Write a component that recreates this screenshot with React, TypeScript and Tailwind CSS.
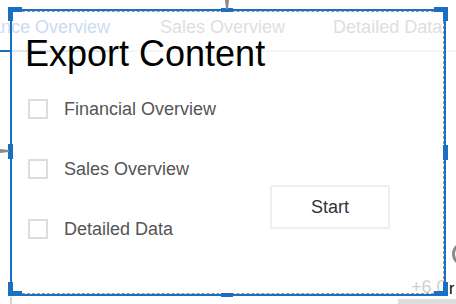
const tabs = [
  { label: "Finance Overview", active: true },
  { label: "Sales Overview", active: false },
  { label: "Detailed Data", active: false },
];

const sections = ["Financial Overview", "Sales Overview", "Detailed Data"];

const Handle = ({ className }: { className: string }) => (
  <div className={`absolute bg-[#1a6fc4] ${className}`} />
);

const App = () => {
  return (
    <div className="relative w-[456px] h-[304px] overflow-hidden bg-white font-['Liberation_Sans',Arial,sans-serif]">
      {/* tab strip behind the dialog */}
      <div className="pt-[15px]">
        <div className="flex ml-[-34px] text-[18px] leading-[24px] whitespace-nowrap">
          {tabs.map((t, i) => (
            <span
              key={t.label}
              className={`${t.active ? "text-[#c9dcf2]" : "text-[#dedede]"} ${
                i === 1 ? "ml-[50px]" : i === 2 ? "ml-[48px]" : ""
              }`}
            >
              {t.label}
            </span>
          ))}
        </div>
        <div className="flex mt-[11px] h-[2px]">
          <div className="w-[10px] bg-[#1a6fc4]" />
          <div className="w-[100px] bg-[#dde7f3]" />
          <div className="flex-1 bg-[#f5f5f5]" />
        </div>
      </div>

      {/* export dialog */}
      <div className="absolute left-[10px] top-[9px] w-[436px] h-[287px]">
        <h1 className="mt-[25px] pl-[15px] text-[36px] leading-[40px] text-black font-normal">
          Export Content
        </h1>
        <div className="flex mt-[5px] pl-[18px]">
          <div className="w-[242px]">
            {sections.map((s) => (
              <label key={s} className="flex items-center gap-4 h-[60px]">
                <span className="w-5 h-5 border-2 border-[#dddddd] bg-white" />
                <span className="text-[18px] text-[#555555]">{s}</span>
              </label>
            ))}
          </div>
          <div className="pt-[106px]">
            <button className="w-[120px] h-[44px] border-2 border-[#eeeeee] bg-white text-[18px] text-[#333333]">
              Start
            </button>
          </div>
        </div>
      </div>

      {/* stray bits of the canvas at the bottom right */}
      <span className="absolute left-[411px] top-[277px] text-[18px] leading-[20px] text-[#d0d0d0]">
        +6.0
      </span>
      <span className="absolute left-[449px] top-[280px] text-[16px] leading-[18px] text-black">
        r
      </span>
      <div className="absolute left-[452px] top-[242px] w-[24px] h-[24px] rounded-full border-[3px] border-[#8a8a8a]" />
      <div className="absolute left-[398px] top-[299px] w-[58px] h-[5px] bg-[#dddddd]" />
      <div className="absolute left-[10px] top-[297px] w-[2px] h-[7px] bg-[#d4d4d4]" />

      {/* selection overlay */}
      <div className="absolute left-[10px] top-[9px] w-[436px] h-[287px] border-2 border-[#1a6fc4] pointer-events-none">
        <div className="absolute inset-0 border-t border-r border-b border-dashed border-[#9a9a9a]" />
      </div>
      <Handle className="left-[8px] top-[7px] w-[14px] h-[5px]" />
      <Handle className="left-[8px] top-[7px] w-[5px] h-[14px]" />
      <Handle className="left-[434px] top-[7px] w-[14px] h-[5px]" />
      <Handle className="left-[443px] top-[7px] w-[5px] h-[14px]" />
      <Handle className="left-[8px] top-[291px] w-[14px] h-[5px]" />
      <Handle className="left-[8px] top-[282px] w-[5px] h-[14px]" />
      <Handle className="left-[434px] top-[291px] w-[14px] h-[5px]" />
      <Handle className="left-[443px] top-[282px] w-[5px] h-[14px]" />
      <Handle className="left-[221px] top-[8px] w-[12px] h-[4px]" />
      <Handle className="left-[221px] top-[293px] w-[12px] h-[4px]" />
      <Handle className="left-[8px] top-[144px] w-[5px] h-[15px]" />
      <Handle className="left-[443px] top-[145px] w-[5px] h-[15px]" />

      {/* resize pointers */}
      <svg className="absolute left-0 top-[147px]" width="9" height="8" viewBox="0 0 9 8">
        <polygon points="0,2 9,3 9,5 0,6" fill="#8a8a8a" />
      </svg>
      <svg className="absolute left-[224px] top-0" width="6" height="9" viewBox="0 0 6 9">
        <polygon points="1,0 5,0 4,9 2,9" fill="#8a8a8a" />
      </svg>
    </div>
  );
};

export default App;
